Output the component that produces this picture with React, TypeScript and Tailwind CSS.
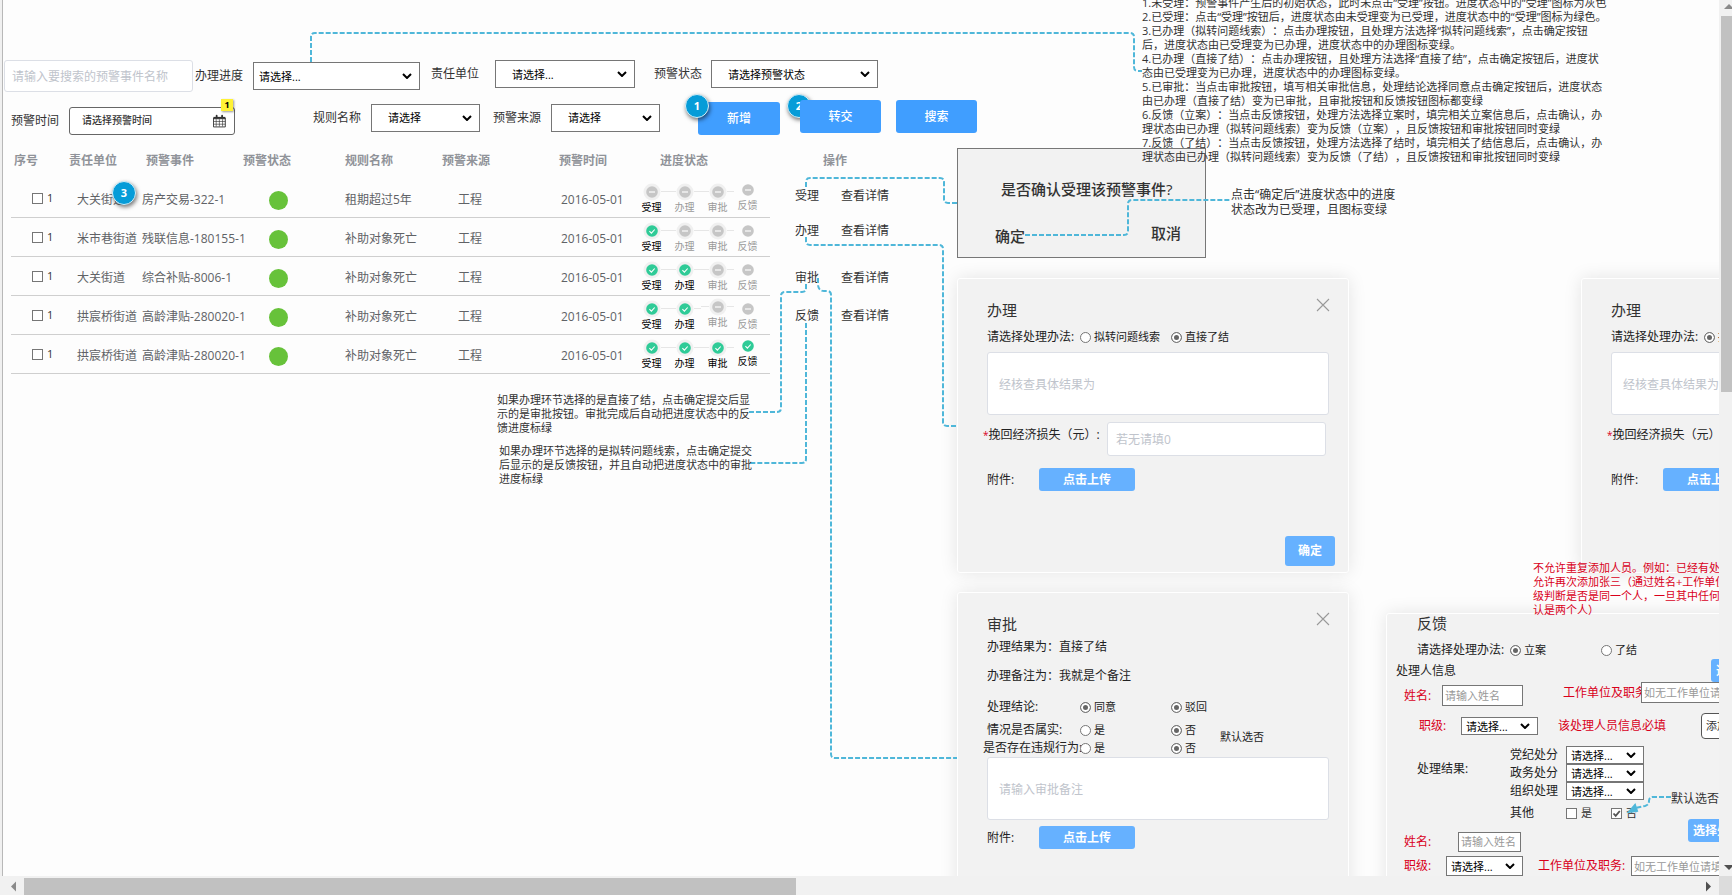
import { useId, type ReactNode } from "react";
import clsx from "clsx";

type StepState = "off" | "offRaised" | "done" | "doneRaised";

interface EventRow {
  unit: string;
  event: string;
  rule: string;
  date: string;
  steps: StepState[];
}

const STEP_NAMES = ["受理", "办理", "审批", "反馈"];

const ROWS: EventRow[] = [
  { unit: "大关街道", event: "房产交易-322-1", rule: "租期超过5年", date: "2016-05-01", steps: ["off", "off", "off", "offRaised"] },
  { unit: "米市巷街道", event: "残联信息-180155-1", rule: "补助对象死亡", date: "2016-05-01", steps: ["done", "off", "off", "off"] },
  { unit: "大关街道", event: "综合补贴-8006-1", rule: "补助对象死亡", date: "2016-05-01", steps: ["done", "done", "off", "off"] },
  { unit: "拱宸桥街道", event: "高龄津贴-280020-1", rule: "补助对象死亡", date: "2016-05-01", steps: ["done", "done", "offRaised", "off"] },
  { unit: "拱宸桥街道", event: "高龄津贴-280020-1", rule: "补助对象死亡", date: "2016-05-01", steps: ["done", "done", "done", "doneRaised"] },
];

const STATUS_NOTES = [
  "1.未受理：预警事件产生后的初始状态，此时未点击“受理”按钮。进度状态中的“受理”图标为灰色",
  "2.已受理：点击“受理”按钮后，进度状态由未受理变为已受理，进度状态中的“受理”图标为绿色。",
  "3.已办理（拟转问题线索）：点击办理按钮，且处理方法选择“拟转问题线索”，点击确定按钮",
  "后，进度状态由已受理变为已办理，进度状态中的办理图标变绿。",
  "4.已办理（直接了结）：点击办理按钮，且处理方法选择“直接了结”，点击确定按钮后，进度状",
  "态由已受理变为已办理，进度状态中的办理图标变绿。",
  "5.已审批：当点击审批按钮，填写相关审批信息，处理结论选择同意点击确定按钮后，进度状态",
  "由已办理（直接了结）变为已审批，且审批按钮和反馈按钮图标都变绿",
  "6.反馈（立案）：当点击反馈按钮，处理方法选择立案时，填完相关立案信息后，点击确认，办",
  "理状态由已办理（拟转问题线索）变为反馈（立案），且反馈按钮和审批按钮同时变绿",
  "7.反馈（了结）：当点击反馈按钮，处理方法选择了结时，填完相关了结信息后，点击确认，办",
  "理状态由已办理（拟转问题线索）变为反馈（了结），且反馈按钮和审批按钮同时变绿",
];

/* ---------- shared controls ---------- */

function Picker({ id, text, label, className, inset }: { id?: string; text: string; label?: string; className: string; inset: string }) {
  return (
    <span className={clsx("grid shrink-0 items-center", className)}>
      <select
        id={id}
        aria-label={label}
        className={clsx("col-start-1 row-start-1 h-full w-full appearance-none border border-[#767676] bg-white text-[11px] leading-none text-black", inset)}
      >
        <option>{text}</option>
      </select>
      <svg viewBox="0 0 10 6" className="pointer-events-none col-start-1 row-start-1 mr-2 h-1.5 w-2.5 justify-self-end" fill="none" stroke="#000" strokeWidth="2">
        <path d="M1 1l4 4 4-4" />
      </svg>
    </span>
  );
}

function FilterPicker({ label, text, className, inset, gap }: { label: string; text: string; className: string; inset: string; gap: string }) {
  const id = useId();
  return (
    <div className={clsx("flex shrink-0 items-center", gap)}>
      <label htmlFor={id} className="whitespace-nowrap">{label}</label>
      <Picker id={id} text={text} className={className} inset={inset} />
    </div>
  );
}

function Radio({ name, label, checked, className }: { name: string; label: string; checked?: boolean; className?: string }) {
  return (
    <label className={clsx("flex shrink-0 items-center gap-[3px] text-[11px] whitespace-nowrap text-[#222]", className)}>
      <input
        type="radio"
        name={name}
        defaultChecked={checked}
        className="size-[11px] shrink-0 appearance-none rounded-full border border-[#767676] bg-white checked:bg-[#666] checked:shadow-[inset_0_0_0_2px_#fff]"
      />
      {label}
    </label>
  );
}

function Check({ label, checked, className }: { label: string; checked?: boolean; className?: string }) {
  return (
    <label className={clsx("flex items-center gap-1 text-[11px] text-[#333]", className)}>
      <span className="grid size-[11px]">
        <input type="checkbox" defaultChecked={checked} className="col-start-1 row-start-1 size-[11px] appearance-none border border-[#767676] bg-white" />
        {checked && (
          <svg viewBox="0 0 11 11" className="pointer-events-none col-start-1 row-start-1 size-[11px]" fill="none" stroke="#555" strokeWidth="1.8">
            <path d="M2.5 5.5l2.2 2.4L8.8 3" />
          </svg>
        )}
      </span>
      {label}
    </label>
  );
}

function BlueButton({ children, className }: { children: ReactNode; className: string }) {
  return (
    <button type="button" className={clsx("shrink-0 rounded-[3px] bg-[#66b1ff] text-xs leading-none font-bold whitespace-nowrap text-white", className)}>
      {children}
    </button>
  );
}

function Marker({ n, className }: { n: number; className: string }) {
  return (
    <span
      className={clsx(
        "absolute flex size-6 items-center justify-center rounded-full border border-[#d5eef8] bg-[#069cd8] text-[11px] font-bold text-white shadow-[1px_2px_4px_rgba(0,0,0,0.55)]",
        className,
      )}
    >
      {n}
    </span>
  );
}

function CalendarIcon() {
  return (
    <svg viewBox="0 0 14 14" className="size-3.5" fill="none" stroke="#333" strokeWidth="1">
      <path d="M.5 3.500V13.500h13V3.500M.5 4.500h13" />
      <path d="M.5 7.500h13M.5 10.500h13M3.500 5v8M7 5v8M10.500 5v8" strokeWidth=".7" />
      <path d="M.5 2.500h13v2H.5z" fill="#333" stroke="none" />
      <path d="M4 1.200v2M10 1.200v2" strokeWidth="2" strokeLinecap="round" />
    </svg>
  );
}

/* ---------- filters ---------- */

function Filters() {
  const dateId = useId();
  return (
    <form className="text-xs text-[#333]">
      <div className="flex items-start gap-[11px] pl-1">
        <div className="flex h-8 shrink-0 items-center gap-[2px]">
          <input
            type="text"
            aria-label="预警事件名称"
            placeholder="请输入要搜索的预警事件名称"
            className="h-8 w-[189px] rounded-[3px] border border-[#dcdfe6] bg-white px-[7px] text-xs placeholder:text-[#c0c4cc]"
          />
          <FilterPicker label="办理进度" text="请选择..." className="h-7 w-[167px]" inset="pl-[5px]" gap="gap-[10px]" />
        </div>
        <div className="flex h-7 shrink-0 items-center gap-[19px]">
          <FilterPicker label="责任单位" text="请选择..." className="h-7 w-[140px]" inset="pl-4" gap="gap-4" />
          <FilterPicker label="预警状态" text="请选择预警状态" className="h-7 w-[167px]" inset="pl-4" gap="gap-[9px]" />
        </div>
      </div>

      <div className="mt-2 flex h-[35px] pl-[11px]">
        <div className="flex shrink-0 items-center gap-[10px] self-end">
          <label htmlFor={dateId}>预警时间</label>
          <span className="flex h-7 w-[166px] items-center rounded-[3px] border border-[#666] bg-white pr-2 pl-3">
            <input id={dateId} type="text" placeholder="请选择预警时间" className="w-full min-w-0 bg-transparent text-[10px] font-medium placeholder:text-[#333]" />
            <CalendarIcon />
          </span>
        </div>
        <div className="ml-[78px] flex shrink-0 items-center gap-[13px] self-center">
          <FilterPicker label="规则名称" text="请选择" className="h-7 w-[109px]" inset="pl-4" gap="gap-[10px]" />
          <FilterPicker label="预警来源" text="请选择" className="h-7 w-[109px]" inset="pl-4" gap="gap-[10px]" />
        </div>
        <button type="button" className="ml-[38px] h-[33px] w-[82px] shrink-0 self-end rounded-[3px] bg-[#409eff] font-medium text-white">新增</button>
        <button type="button" className="relative z-10 ml-5 h-[33px] w-[81px] shrink-0 self-start rounded-[3px] bg-[#409eff] font-medium text-white">转交</button>
        <button type="button" className="ml-[15px] h-[33px] w-[81px] shrink-0 self-start rounded-[3px] bg-[#409eff] font-medium text-white">搜索</button>
      </div>
    </form>
  );
}

/* ---------- event table ---------- */

function StepIcon({ done, halo }: { done: boolean; halo: boolean }) {
  return (
    <svg viewBox="0 0 18 18" className="-my-0.5 size-[18px] shrink-0">
      {halo && <circle cx="9" cy="9" r="8.5" fill="#f0f0f0" />}
      <circle cx="9" cy="9" r="5.8" fill={done ? "#2fcb97" : "#c6c6c6"} />
      {done ? (
        <path d="M6.4 9.2l2 1.9 3.3-3.6" fill="none" stroke="#fff" strokeWidth="1.1" />
      ) : (
        <path d="M6 9h6" stroke="#f4f4f4" strokeWidth="1.4" />
      )}
    </svg>
  );
}

function Progress({ steps }: { steps: StepState[] }) {
  return (
    <ol className="flex items-start">
      {steps.map((state, i) => {
        const done = state.startsWith("done");
        const raised = state.endsWith("Raised");
        const last = i === steps.length - 1;
        return (
          <li key={STEP_NAMES[i]} className={clsx("flex flex-col items-center", last ? "w-[27px]" : "w-[33px]", !raised && "pt-0.5")}>
            <div className="flex h-4 w-full items-center">
              <span className={clsx("h-px flex-1", i > 0 && !last && "bg-[#e6e6e6]")} />
              <StepIcon done={done} halo={!last} />
              <span className={clsx("h-px flex-1", !last && "bg-[#e6e6e6]")} />
            </div>
            <span className={clsx("text-[10px] leading-[15px]", done || i === 0 ? "text-black" : "text-[#999]")}>{STEP_NAMES[i]}</span>
          </li>
        );
      })}
    </ol>
  );
}

function EventTable() {
  return (
    <table className="w-[759px] shrink-0 table-fixed border-separate border-spacing-0 text-left text-xs whitespace-nowrap text-[#606266]">
      <colgroup>
        <col className="w-[58px]" />
        <col className="w-[73px]" />
        <col className="w-[101px]" />
        <col className="w-[102px]" />
        <col className="w-[97px]" />
        <col className="w-[117px]" />
        <col className="w-[76px]" />
        <col className="w-[135px]" />
      </colgroup>
      <thead className="text-[#909399] [&_th]:pb-[2px] [&_th]:font-semibold">
        <tr className="h-[35px]">
          <th className="p-0 pl-[3px]">序号</th>
          <th className="p-0">责任单位</th>
          <th className="p-0 pl-1">预警事件</th>
          <th className="p-0">预警状态</th>
          <th className="p-0">规则名称</th>
          <th className="p-0">预警来源</th>
          <th className="p-0">预警时间</th>
          <th className="p-0 pl-[25px]">进度状态</th>
        </tr>
      </thead>
      <tbody className="[&_td]:h-[39px] [&_td]:border-b [&_td]:border-[#cfcfcf]">
        {ROWS.map((row, i) => (
          <tr key={i}>
            <td className="p-0 pl-[21px]"><Check label="1" /></td>
            <td className="p-0 pt-1 pl-2">{row.unit}</td>
            <td className="p-0 pt-1">{row.event}</td>
            <td className="p-0 pt-1 pl-[26px]"><span className="block size-[19px] rounded-full bg-[#67c23a]" /></td>
            <td className="p-0 pt-1">{row.rule}</td>
            <td className="p-0 pt-1 pl-4">工程</td>
            <td className="p-0 pt-1 pl-[2px]">{row.date}</td>
            <td className="p-0"><Progress steps={row.steps} /></td>
          </tr>
        ))}
      </tbody>
    </table>
  );
}

function Operations() {
  return (
    <div className="ml-[25px] grid grid-rows-[35px_34px_36px_58px_18px] items-center self-start text-xs whitespace-nowrap text-[#333]">
      <span className="pb-[2px] pl-7 font-semibold text-[#909399]">操作</span>
      {STEP_NAMES.map((name) => (
        <div key={name} className="flex gap-[22px]">
          <a href="#">{name}</a>
          <a href="#">查看详情</a>
        </div>
      ))}
    </div>
  );
}

/* ---------- dialogs ---------- */

function Panel({ title, className, children }: { title: string; className: string; children: ReactNode }) {
  return (
    <section className={clsx("absolute w-[392px] rounded-[3px] border border-white bg-[#f2f2f2] pt-[19px] pb-1.5 pl-[29px] text-xs text-[#222] shadow-[0_0_18px_rgba(0,0,0,0.1)]", className)}>
      <header className="mb-px flex h-6 items-start justify-between pr-[18px]">
        <h2 className="text-[15px] leading-6 text-[#333]">{title}</h2>
        <button type="button" aria-label="关闭">
          <svg viewBox="0 0 14 14" className="size-3.5" stroke="#999" strokeWidth="1.1">
            <path d="M1 1l12 12M13 1L1 13" />
          </svg>
        </button>
      </header>
      {children}
    </section>
  );
}

function Attachment({ className }: { className: string }) {
  return (
    <div className={clsx("flex items-center", className)}>
      <span className="w-[52px]">附件:</span>
      <BlueButton className="h-[23px] w-24">点击上传</BlueButton>
    </div>
  );
}

const AREA = "block w-[342px] resize-none rounded-[3px] border border-[#dcdfe6] bg-white px-[11px] pt-6 text-xs placeholder:text-[#c0c4cc]";

function HandlePanel({ className, transfer }: { className: string; transfer?: boolean }) {
  const id = useId();
  return (
    <Panel title="办理" className={className}>
      <div className="mt-[5px] flex h-5 items-center">
        <span className="w-[93px] shrink-0">请选择处理办法:</span>
        <Radio name={id + "way"} label="拟转问题线索" checked={transfer} className="w-[91px]" />
        <Radio name={id + "way"} label="直接了结" checked={!transfer} />
      </div>
      <textarea aria-label="核查结果" placeholder="经核查具体结果为" className={clsx(AREA, "mt-[5px] h-[63px]")} />
      <div className="mt-[7px] flex items-start">
        <label htmlFor={id + "loss"} className="-ml-1 w-[124px] leading-[26px] whitespace-nowrap">
          <span className="text-[10px] text-[#d9001b]">*</span>挽回经济损失（元）:
        </label>
        <input id={id + "loss"} type="text" placeholder="若无请填0" className="h-[34px] w-[219px] rounded-[3px] border border-[#dcdfe6] bg-white px-2 text-xs placeholder:text-[#c0c4cc]" />
      </div>
      <Attachment className="mt-3" />
      <div className="mt-[45px] flex justify-end pr-[13px]">
        <BlueButton className="h-[30px] w-[50px]">确定</BlueButton>
      </div>
    </Panel>
  );
}

function ReviewPanel({ className }: { className: string }) {
  const id = useId();
  return (
    <Panel title="审批" className={className}>
      <p className="h-5 leading-5">办理结果为：直接了结</p>
      <p className="mt-[9px] h-5 leading-5">办理备注为：我就是个备注</p>
      <div className="mt-[11px] flex h-5 items-center">
        <span className="w-[93px]">处理结论:</span>
        <Radio name={id + "a"} label="同意" checked className="w-[91px]" />
        <Radio name={id + "b"} label="驳回" checked />
      </div>
      <div className="mt-1 flex items-center gap-6">
        <div>
          <div className="flex h-[18px] items-center">
            <span className="w-[93px]">情况是否属实:</span>
            <Radio name={id + "c"} label="是" className="w-[91px]" />
            <Radio name={id + "c"} label="否" checked />
          </div>
          <div className="flex h-[18px] items-center">
            <span className="-ml-1 w-[97px] whitespace-nowrap">是否存在违规行为:</span>
            <Radio name={id + "d"} label="是" className="w-[91px]" />
            <Radio name={id + "d"} label="否" checked />
          </div>
        </div>
        <span className="pb-1 text-[11px]">默认选否</span>
      </div>
      <textarea aria-label="审批备注" placeholder="请输入审批备注" className={clsx(AREA, "h-[63px]")} />
      <Attachment className="mt-1.5 pb-14" />
    </Panel>
  );
}

const BOX = "shrink-0 border border-[#767676] bg-white px-[2px] text-[11px] placeholder:text-[#999]";

function FeedbackPanel({ className }: { className: string }) {
  const id = useId();
  return (
    <section className={clsx("absolute w-[460px] rounded-[3px] border border-white bg-[#f2f2f2] pb-6 text-xs whitespace-nowrap text-[#222] shadow-[0_0_18px_rgba(0,0,0,0.1)]", className)}>
      <h2 className="pl-[30px] text-[15px] leading-[18px] text-[#333]">反馈</h2>
      <div className="mt-[9px] flex h-[18px] items-center pl-[30px]">
        <span className="w-[93px]">请选择处理办法:</span>
        <Radio name={id + "way"} label="立案" checked className="w-[91px]" />
        <Radio name={id + "way"} label="了结" />
      </div>
      <div className="flex h-[23px] items-center pl-[9px]">
        <span className="w-[315px]">处理人信息</span>
        <BlueButton className="h-[23px] px-[5px]">选择处理人</BlueButton>
      </div>
      <div className="flex h-6 pl-[17px]">
        <div className="flex items-center self-end">
          <label htmlFor={id + "n1"} className="w-[38px] text-[#d9001b]">姓名:</label>
          <input id={id + "n1"} type="text" placeholder="请输入姓名" className={clsx(BOX, "h-[21px] w-[81px]")} />
        </div>
        <div className="ml-10 flex items-center self-start">
          <label htmlFor={id + "u1"} className="w-[78px] overflow-hidden text-[#d9001b]">工作单位及职务</label>
          <input id={id + "u1"} type="text" placeholder="如无工作单位请填无" className={clsx(BOX, "h-[21px] w-[120px]")} />
        </div>
      </div>
      <div className="mt-[7px] flex h-[26px] items-center pl-8 text-[#d9001b]">
        <label htmlFor={id + "l1"} className="w-[42px]">职级:</label>
        <Picker id={id + "l1"} text="请选择..." className="h-[18px] w-[77px]" inset="pl-1" />
        <span className="ml-5 w-[143px]">该处理人员信息必填</span>
        <button type="button" className="h-[26px] rounded border border-[#555] bg-white px-1 text-[11px] text-[#333]">添加人员</button>
      </div>
      <div className="mt-[7px] flex items-center pl-[30px]">
        <span className="w-[93px] pb-2">处理结果:</span>
        <div>
          {["党纪处分", "政务处分", "组织处理"].map((name) => (
            <div key={name} className="flex h-[18px] items-center">
              <label htmlFor={id + name} className="w-14">{name}</label>
              <Picker id={id + name} text="请选择..." className="h-[18px] w-[78px]" inset="pl-1" />
            </div>
          ))}
        </div>
      </div>
      <div className="mt-[3px] flex">
        <div className="w-[301px]">
          <div className="flex h-5 items-center pl-[123px]">
            <span className="w-14">其他</span>
            <Check label="是" className="w-[45px]" />
            <Check label="否" checked />
          </div>
          <div className="mt-2 flex h-[21px] items-center pl-[17px]">
            <label htmlFor={id + "n2"} className="w-[54px] text-[#d9001b]">姓名:</label>
            <input id={id + "n2"} type="text" placeholder="请输入姓名" className={clsx(BOX, "h-5 w-[63px]")} />
          </div>
        </div>
        <BlueButton className="mt-4 h-[23px] px-[5px]">选择处理人</BlueButton>
      </div>
      <div className="mt-1 flex h-5 items-center pl-[17px]">
        <label htmlFor={id + "l2"} className="w-[42px] text-[#d9001b]">职级:</label>
        <Picker id={id + "l2"} text="请选择..." className="h-5 w-[77px]" inset="pl-1" />
        <label htmlFor={id + "u2"} className="ml-[15px] w-[93px] text-[#d9001b]">工作单位及职务:</label>
        <input id={id + "u2"} type="text" placeholder="如无工作单位请填无" className={clsx(BOX, "h-5 w-[120px]")} />
      </div>
    </section>
  );
}

function ConfirmPanel({ className }: { className: string }) {
  return (
    <section className={clsx("absolute flex w-[249px] flex-col border border-[#777] bg-[#f2f2f2] pt-7 pb-[9px] text-[15px] font-medium text-[#333]", className)}>
      <p className="pl-[43px] leading-6">是否确认受理该预警事件?</p>
      <div className="mt-5 flex items-start justify-between pr-6 pl-[37px]">
        <button type="button" className="pt-[3px] leading-6">确定</button>
        <button type="button" className="leading-6">取消</button>
      </div>
    </section>
  );
}

/* ---------- canvas decoration ---------- */

function Connectors() {
  return (
    <svg className="pointer-events-none absolute top-0 left-0 z-10 h-full w-full" fill="none" stroke="#4fb7d9" strokeWidth="2" strokeDasharray="5 2">
      <path d="M311 62V37q0-4 4-4H1130q4 0 4 4V67q0 4 4 4h4" />
      <path d="M806 187v-5q0-4 4-4H940q4 0 4 4v17q0 4 4 4h9" />
      <path d="M806 237v4q0 4 4 4H939q4 0 4 4V422q0 4 4 4h10" />
      <path d="M806 284v4q0 4-4 4h-17q-4 0-4 4V408q0 4-4 4h-30" />
      <path d="M806 323V459q0 4-4 4h-52" />
      <path d="M818 278v6q0 7 6 7h3q4 0 4 4V754q0 4 4 4h122" />
      <path d="M1025 235h99q4 0 4-4v-27q0-4 4-4h99" />
      <path d="M1671 797h-18q-4 0-4 4t-4 5l-10 2" />
      <path d="M1629 812l6-7 2 6z" fill="#4fb7d9" strokeDasharray="none" />
    </svg>
  );
}

function Note({ lines, className }: { lines: string[]; className: string }) {
  return (
    <p className={clsx("absolute z-10 whitespace-nowrap", className)}>
      {lines.map((line) => (
        <span key={line} className="block">{line}</span>
      ))}
    </p>
  );
}

export default function App() {
  return (
    <div className="grid h-screen w-full grid-cols-[minmax(0,1fr)_13px] grid-rows-[minmax(0,1fr)_19px] bg-[#fdfdfd] font-['Open_Sans','Noto_Sans_CJK_SC',sans-serif] [text-spacing-trim:space-all]">
      <main className="relative overflow-hidden pt-[60px]">
        <Filters />
        <div className="mt-[9px] flex pl-[11px]">
          <EventTable />
          <Operations />
        </div>

        <span className="absolute top-[99px] left-[221px] flex size-3 items-center justify-center bg-[#fff235] text-[9px] font-bold text-black shadow-[1px_1px_2px_rgba(0,0,0,0.4)]">1</span>
        <Marker n={1} className="top-[94px] left-[685px]" />
        <Marker n={2} className="top-[94px] left-[787px]" />
        <Marker n={3} className="top-[181px] left-[112px]" />

        <ConfirmPanel className="top-[148px] left-[957px]" />
        <HandlePanel className="top-[278px] left-[957px]" />
        <HandlePanel className="top-[278px] left-[1581px]" transfer />
        <ReviewPanel className="top-[592px] left-[957px]" />
        <FeedbackPanel className="top-[613px] left-[1386px]" />
        <Connectors />

        <Note className="-top-1 left-[1142px] text-[11px] leading-[14px] text-[#333]" lines={STATUS_NOTES} />
        <Note className="top-[187px] left-[1231px] text-xs leading-[15px] text-[#333]" lines={["点击“确定后”进度状态中的进度", "状态改为已受理，且图标变绿"]} />
        <Note
          className="top-[393px] left-[497px] text-[11px] leading-[14px] text-[#333]"
          lines={["如果办理环节选择的是直接了结，点击确定提交后显", "示的是审批按钮。审批完成后自动把进度状态中的反", "馈进度标绿"]}
        />
        <Note
          className="top-[444px] left-[499px] text-[11px] leading-[14px] text-[#333]"
          lines={["如果办理环节选择的是拟转问题线索，点击确定提交", "后显示的是反馈按钮，并且自动把进度状态中的审批", "进度标绿"]}
        />
        <Note
          className="top-[561px] left-[1533px] text-[11px] leading-[14px] text-[#d9001b]"
          lines={["不允许重复添加人员。例如：已经有处理", "允许再次添加张三（通过姓名+工作单位", "级判断是否是同一个人，一旦其中任何一", "认是两个人）"]}
        />
        <Note className="top-[791px] left-[1671px] text-xs leading-[15px] text-[#333]" lines={["默认选否"]} />
        <span className="absolute inset-y-0 left-0 w-[3px] border-r border-[#b8b8b8] bg-[#f0f0f0]" />
      </main>

      <div aria-hidden className="flex flex-col items-end justify-between bg-[#f1f1f1]">
        <svg viewBox="0 0 11 16" className="h-4 w-[11px]" fill="#8a8a8a"><path d="M3 9l5-5 3 3v2z" /></svg>
        <span className="h-[376px] w-[11px] bg-[#c1c1c1]" />
        <span className="flex-1" />
        <svg viewBox="0 0 11 16" className="h-4 w-[11px]" fill="#505050"><path d="M3 5h8v2L8 10z" /></svg>
      </div>
      <div aria-hidden className="flex items-end bg-[#f1f1f1] pl-[3px]">
        <svg viewBox="0 0 21 17" className="h-[17px] w-[21px]" fill="#8a8a8a"><path d="M8 8.500l5-5v10z" /></svg>
        <span className="h-[17px] w-[45%] bg-[#c1c1c1]" />
        <span className="flex-1" />
        <svg viewBox="0 0 17 17" className="h-[17px] w-[17px]" fill="#505050"><path d="M9 8.500l-5-5v10z" /></svg>
      </div>
      <div aria-hidden className="bg-[#dcdcdc]" />
    </div>
  );
}
